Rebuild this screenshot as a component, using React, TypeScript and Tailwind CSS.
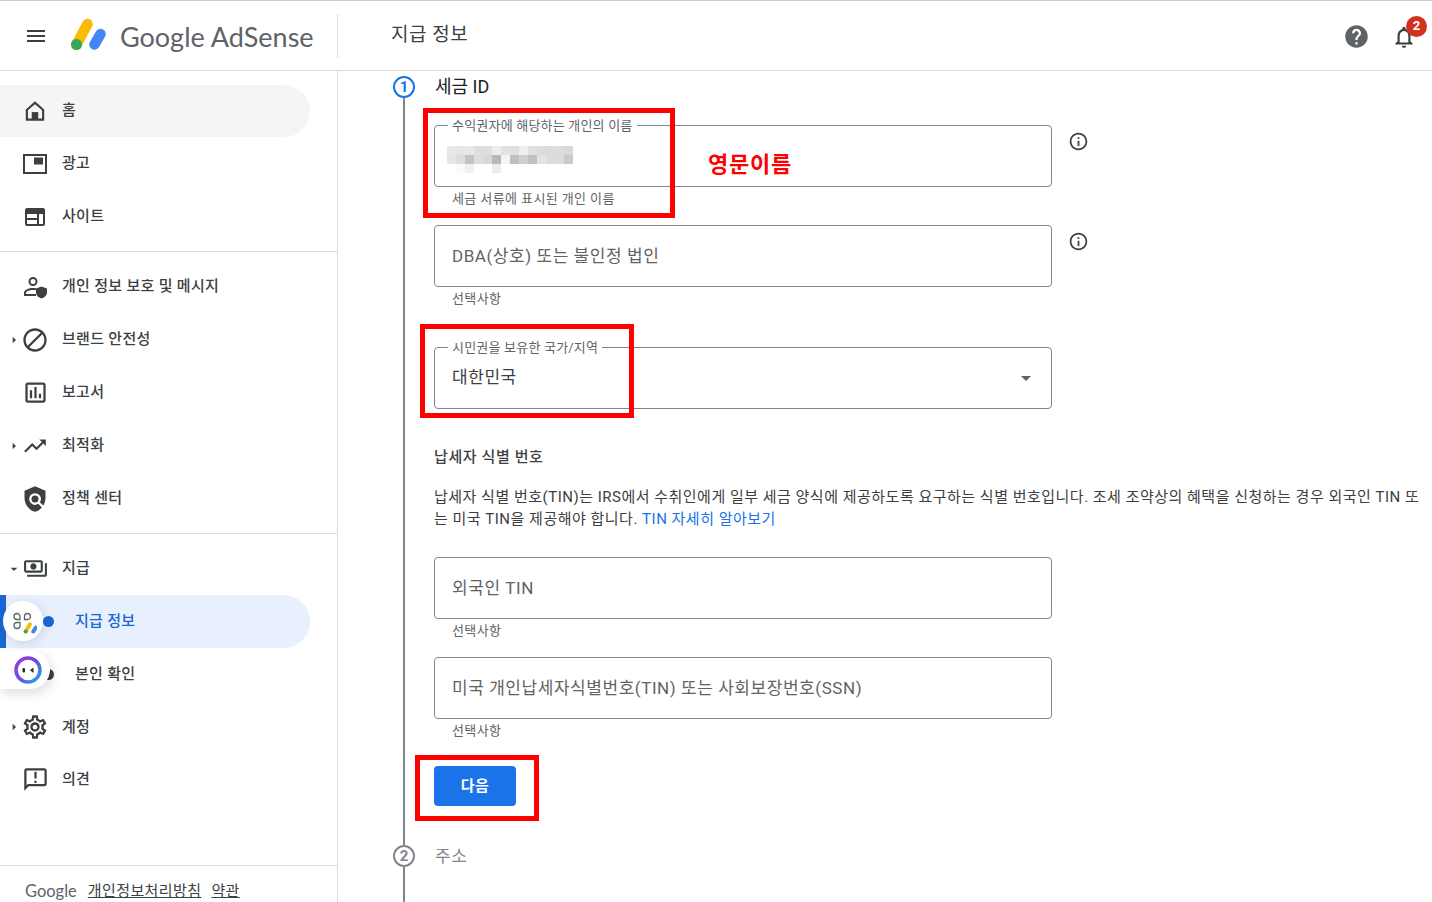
import {
  MdArrowDropDown,
  MdArrowRight,
  MdBlock,
  MdHelp,
  MdInfoOutline,
  MdMenu,
  MdOutlineAnnouncement,
  MdOutlineAssessment,
  MdOutlineNotifications,
  MdOutlinePayments,
  MdOutlineSettings,
  MdPolicy,
  MdTrendingUp,
} from "react-icons/md";
import type { ReactNode } from "react";

const font = "font-['Roboto','Noto_Sans_CJK_KR',sans-serif]";

function Logo() {
  return (
    <svg viewBox="0 0 40 40" className="size-10 shrink-0" aria-hidden="true">
      <line x1="8.5" y1="30.5" x2="19.5" y2="10" stroke="#fbbc04" strokeWidth="10.500" strokeLinecap="round" />
      <line x1="26.5" y1="30.5" x2="32.5" y2="20" stroke="#4285f4" strokeWidth="10.500" strokeLinecap="round" />
      <circle cx="8.5" cy="30.5" r="5.6" fill="#34a853" />
    </svg>
  );
}

function HomeIcon() {
  return (
    <svg viewBox="0 0 24 24" className="size-[26px] shrink-0" fill="#3c4043" aria-hidden="true">
      <path d="M12 3 3.500 10.500V21h17V10.500L12 3Zm6.500 16h-13v-7.600L12 5.700l6.500 5.700V19Z" />
      <rect x="9" y="13" width="6" height="7" />
    </svg>
  );
}

function AdIcon() {
  return (
    <svg viewBox="0 0 24 20" className="h-[20px] w-[24px] shrink-0" fill="#3c4043" aria-hidden="true">
      <path d="M0 0h24v20H0V0Zm2 2v16h20V2H2Z" />
      <rect x="11" y="3.500" width="9" height="7" />
    </svg>
  );
}

function SiteIcon() {
  return (
    <svg viewBox="0 0 24 24" className="size-6 shrink-0" fill="#3c4043" aria-hidden="true">
      <path d="M4 3h16a2 2 0 0 1 2 2v14a2 2 0 0 1-2 2H4a2 2 0 0 1-2-2V5a2 2 0 0 1 2-2Zm0 6v4h10V9H4Zm12 0v10h4V9h-4ZM4 15v4h10v-4H4Z" />
    </svg>
  );
}

function PrivacyIcon() {
  return (
    <svg viewBox="0 0 24 24" className="size-6 shrink-0" fill="#3c4043" aria-hidden="true">
      <path d="M10 2a4.500 4.500 0 1 1 0 9 4.500 4.500 0 0 1 0-9Zm0 2a2.500 2.500 0 1 0 0 5 2.500 2.500 0 0 0 0-5ZM1 21v-3c0-3.200 5-5 9-5 1 0 2 .1 3 .3v2C12 15.100 11 15 10 15c-3.500 0-7 1.300-7 3v1h10v2H1Z" />
      <path d="M18.500 11.500 24 13.500v4c0 2.800-2.300 5-5.500 6-3.200-1-5.500-3.200-5.500-6v-4l5.500-2Z" />
    </svg>
  );
}

function NavItem({
  icon,
  label,
  arrow,
  active,
  tall,
}: {
  icon: ReactNode;
  label: string;
  arrow?: "right" | "down";
  active?: boolean;
  tall?: boolean;
}) {
  return (
    <a
      href="#"
      className={`relative flex items-center w-[310px] rounded-r-full text-[15px] tracking-[0.3px] font-medium text-[#3c4043] ${
        tall ? "h-[52px]" : "h-[53px]"
      } ${active ? "bg-[#f5f5f5]" : ""}`}
    >
      <span className="flex w-[12px] ml-[8px] justify-center">
        {arrow === "right" && <MdArrowRight className="size-4 shrink-0 text-[#3c4043]" />}
        {arrow === "down" && <MdArrowDropDown className="size-4 shrink-0 text-[#3c4043]" />}
      </span>
      <span className="flex w-[24px] ml-[3px] justify-center">{icon}</span>
      <span className={`ml-[15px] ${active ? "pb-[2px]" : ""}`}>{label}</span>
    </a>
  );
}

function SubItem({ label, active }: { label: string; active?: boolean }) {
  return (
    <a
      href="#"
      className={`flex items-center w-[310px] rounded-r-full text-[15px] tracking-[0.3px] font-medium ${
        active ? "h-[53px] bg-[#e8f0fe] text-[#1967d2] border-l-[6px] border-[#1967d2]" : "h-[53px] text-[#3c4043] pl-[6px]"
      }`}
    >
      <span className={`ml-[37px] size-[11px] rounded-full ${active ? "bg-[#1967d2]" : "bg-[#3c4043]"}`} />
      <span className="ml-[21px]">{label}</span>
    </a>
  );
}

function Sidebar() {
  return (
    <aside className="relative flex flex-col w-[338px] shrink-0 border-r border-[#dadce0] h-full">
      <nav className="flex flex-col pt-[14px]">
        <NavItem tall active icon={<HomeIcon />} label="홈" />
        <NavItem icon={<AdIcon />} label="광고" />
        <NavItem icon={<SiteIcon />} label="사이트" />
      </nav>
      <div className="mt-[8px] border-t border-[#dadce0]" />
      <nav className="flex flex-col pt-[8px]">
        <NavItem icon={<PrivacyIcon />} label="개인 정보 보호 및 메시지" />
        <NavItem arrow="right" icon={<MdBlock className="size-[28px] shrink-0 text-[#3c4043]" />} label="브랜드 안전성" />
        <NavItem icon={<MdOutlineAssessment className="size-[27px] shrink-0 text-[#3c4043]" />} label="보고서" />
        <NavItem arrow="right" icon={<MdTrendingUp className="size-[26px] shrink-0 text-[#3c4043]" />} label="최적화" />
        <NavItem icon={<MdPolicy className="size-[28px] shrink-0 text-[#3c4043]" />} label="정책 센터" />
      </nav>
      <div className="mt-[8px] border-t border-[#dadce0]" />
      <nav className="flex flex-col pt-[8px]">
        <NavItem arrow="down" icon={<MdOutlinePayments className="size-[25px] shrink-0 text-[#3c4043]" />} label="지급" />
        <SubItem active label="지급 정보" />
        <SubItem label="본인 확인" />
        <NavItem tall arrow="right" icon={<MdOutlineSettings className="size-[28px] shrink-0 text-[#3c4043]" />} label="계정" />
        <NavItem tall icon={<MdOutlineAnnouncement className="size-[27px] shrink-0 text-[#3c4043]" />} label="의견" />
      </nav>
      <footer className="mt-auto flex items-start h-[37px] border-t border-[#dadce0] pl-[25px] pt-[14px] text-[15px] leading-[22px] tracking-[0.4px] text-[#3c4043]">
        <span className="font-['Lato',sans-serif] text-[16.5px] tracking-normal text-[#5f6368]">Google</span>
        <a href="#" className="ml-[11px] underline">개인정보처리방침</a>
        <a href="#" className="ml-[10px] underline">약관</a>
      </footer>

      {/* floating browser extension buttons */}
      <div className="absolute left-[3px] top-[530px] flex size-[40px] items-center justify-center rounded-full bg-white shadow-[2px_2px_10px_rgba(0,0,0,0.12)]">
        <svg viewBox="0 0 28 28" className="size-7" aria-hidden="true">
          <path d="M11 7.500a3 3 0 0 1 3 3v3h-3a3 3 0 0 1 0-6Z" fill="none" stroke="#5f6368" strokeWidth="1.300" transform="translate(-3 -1)" />
          <path d="M18.500 6.500a3 3 0 0 1 0 6h-3v-3a3 3 0 0 1 3-3Z" fill="none" stroke="#5f6368" strokeWidth="1.300" />
          <path d="M11 15.500v3a3 3 0 1 1-3-3h3Z" fill="none" stroke="#5f6368" strokeWidth="1.300" />
          <line x1="16.700" y1="24.500" x2="21" y2="17.300" stroke="#fbbc04" strokeWidth="4" strokeLinecap="round" />
          <line x1="24.300" y1="24.500" x2="26.700" y2="20.700" stroke="#4285f4" strokeWidth="4" strokeLinecap="round" />
          <circle cx="16.700" cy="24.500" r="2" fill="#34a853" />
        </svg>
      </div>
      <div className="absolute left-0 top-[579px] flex h-[39px] w-[50px] items-center justify-end rounded-r-full bg-white pr-[8px] shadow-[2px_4px_12px_rgba(0,0,0,0.14)]">
        <svg viewBox="0 0 28 28" className="size-7" aria-hidden="true">
          <defs>
            <linearGradient id="ring" x1="0" y1="0" x2="1" y2="1">
              <stop offset="0" stopColor="#a436d8" />
              <stop offset="0.500" stopColor="#6a4de0" />
              <stop offset="1" stopColor="#1fa8f0" />
            </linearGradient>
          </defs>
          <circle cx="14" cy="14" r="12" fill="#fff" stroke="url(#ring)" strokeWidth="3.500" />
          <rect x="8.500" y="12" width="2.500" height="4.500" rx="1" fill="#27272a" />
          <path d="M19.500 11.500 16 14.200l3.500 2.800v-5.500Z" fill="#27272a" />
        </svg>
      </div>
    </aside>
  );
}

function Field({
  label,
  placeholder,
  helper,
  info,
  value,
  children,
  className,
}: {
  label?: string;
  placeholder?: string;
  helper?: string;
  info?: boolean;
  value?: string;
  children?: ReactNode;
  className?: string;
}) {
  return (
    <div className={`relative w-[618px] ${className ?? ""}`}>
      <div className="relative flex h-[62px] items-center rounded-[4px] border border-[#80868b] px-[17px] text-[17px] tracking-[0.55px] text-[#5f6368]">
        {label && (
          <span className="absolute -top-[8px] left-[13px] bg-white px-[4px] text-[13px] leading-[16px] tracking-[0.2px] text-[#5f6368]">
            {label}
          </span>
        )}
        {placeholder && <span className="pt-px">{placeholder}</span>}
        {value && <span className="text-[#3c4043]">{value}</span>}
        {children}
      </div>
      {helper && <p className="h-[24px] pl-[18px] text-[13px] leading-[24px] tracking-[0.4px] text-[#5f6368]">{helper}</p>}
      {info && <MdInfoOutline className="absolute left-[634px] top-[6px] size-[21px] text-[#3c4043]" />}
    </div>
  );
}

const blurCells = [
  "bg-[#e8e8e8]", "bg-[#e5e5e5]", "bg-[#e8e8e8]", "bg-[#dedede]", "bg-[#dedede]", "bg-[#ececec]", "bg-[#e2e2e2]", "bg-[#e0e0e0]", "bg-[#eeeeee]", "bg-[#e0e0e0]", "bg-[#dcdcdc]", "bg-[#dcdcdc]", "bg-[#dddddd]", "bg-[#d8d8d8]",
  "bg-[#e6e6e6]", "bg-[#dddddd]", "bg-[#c4c4c4]", "bg-[#dddddd]", "bg-[#d8d8d8]", "bg-[#b8b8b8]", "bg-[#f4f4f4]", "bg-[#c0c0c0]", "bg-[#cfcfcf]", "bg-[#c2c2c2]", "bg-[#e4e4e4]", "bg-[#dcdcdc]", "bg-[#dcdcdc]", "bg-[#cacaca]",
  "bg-white", "bg-[#fafafa]", "bg-[#f0f0f0]", "bg-white", "bg-white", "bg-[#ececec]", "bg-white", "bg-white", "bg-white", "bg-white", "bg-white", "bg-white", "bg-white", "bg-white",
];

function PayoutForm() {
  return (
    <main className={`relative flex-1 h-full pl-[55px] overflow-hidden ${font}`}>
      <div className="flex h-[769px]">
        <div className="flex flex-col items-center w-[22px] pt-[5px]">
          <span className="flex size-[22px] shrink-0 items-center justify-center rounded-full border-2 border-[#1a73e8] text-[15px] font-bold text-[#1a73e8]">
            1
          </span>
          <span className="w-[2px] flex-1 bg-[#80868b]" />
        </div>
        <div className="ml-[19px] pt-[5px]">
          <h2 className="h-[22px] pl-px text-[18px] leading-[22px] text-[#202124]">세금 ID</h2>
          <Field
            className="mt-[27px]"
            label="수익권자에 해당하는 개인의 이름"
            helper="세금 서류에 표시된 개인 이름"
            info
          >
            <div className="mt-[7px] ml-[-5px] grid w-[126px] grid-cols-[repeat(14,9px)]">
              {blurCells.map((c, i) => (
                <span key={i} className={`h-[9px] ${c}`} />
              ))}
            </div>
          </Field>
          <Field className="mt-[14px]" placeholder="DBA(상호) 또는 불인정 법인" helper="선택사항" info />
          <Field className="mt-[36px]" label="시민권을 보유한 국가/지역" value="대한민국">
            <MdArrowDropDown className="ml-auto -mr-[4px] size-6 text-[#5f6368]" />
          </Field>
          <h3 className="mt-[37px] text-[15px] tracking-[0.6px] font-medium leading-[22px] text-[#3c4043]">납세자 식별 번호</h3>
          <p className="mt-[18px] w-[990px] text-[15px] tracking-[0.5px] leading-[22px] text-[#3c4043]">
            납세자 식별 번호(TIN)는 IRS에서 수취인에게 일부 세금 양식에 제공하도록 요구하는 식별 번호입니다. 조세 조약상의 혜택을 신청하는 경우 외국인 TIN 또는 미국 TIN을 제공해야 합니다.{" "}
            <a href="#" className="text-[#1a73e8]">TIN 자세히 알아보기</a>
          </p>
          <Field className="mt-[27px]" placeholder="외국인 TIN" helper="선택사항" />
          <Field className="mt-[14px]" placeholder="미국 개인납세자식별번호(TIN) 또는 사회보장번호(SSN)" helper="선택사항" />
          <button
            type="button"
            className="mt-[23px] block h-[40px] w-[82px] rounded-[4px] bg-[#1a73e8] text-[15px] tracking-[0.5px] font-bold text-white"
          >
            다음
          </button>
        </div>
      </div>
      <div className="flex h-[62px]">
        <div className="flex flex-col items-center w-[22px]">
          <span className="w-[2px] h-[5px] bg-[#80868b]" />
          <span className="flex size-[22px] shrink-0 items-center justify-center rounded-full border-2 border-[#80868b] text-[15px] font-bold text-[#80868b]">
            2
          </span>
          <span className="w-[2px] flex-1 bg-[#80868b]" />
        </div>
        <h2 className="ml-[20px] mt-[5px] text-[17px] tracking-[0.6px] leading-[22px] text-[#80868b]">주소</h2>
      </div>

      {/* red annotations drawn on top of the capture */}
      <div className="absolute left-[85px] top-[37px] h-[110px] w-[252px] border-[5px] border-[#ff0000]" />
      <div className="absolute left-[82px] top-[253px] h-[94px] w-[214px] border-[5px] border-[#ff0000]" />
      <div className="absolute left-[77px] top-[684px] h-[66px] w-[124px] border-[5px] border-[#ff0000]" />
      <span className="absolute left-[370px] top-[79px] text-[22px] tracking-[0.8px] leading-[30px] font-bold text-[#ff0000]">영문이름</span>
    </main>
  );
}

export default function App() {
  return (
    <div className={`flex h-[902px] w-[1432px] flex-col overflow-hidden bg-white ${font}`}>
      <header className="flex h-[71px] shrink-0 items-center border-t border-b border-t-[#cccccc] border-b-[#dadce0]">
        <div className="flex w-[338px] items-center">
          <MdMenu className="ml-[24px] size-6 shrink-0 text-[#3c4043]" />
          <span className="ml-[20px] -mt-[4px]"><Logo /></span>
          <span className="ml-[12px] pt-[4px] font-['Lato',sans-serif] text-[27px] text-[#5f6368]">Google AdSense</span>
        </div>
        <span className="h-[44px] border-l border-[#dadce0] -ml-px" />
        <h1 className="ml-[53px] text-[19px] tracking-[0.5px] text-[#3c4043]">지급 정보</h1>
        <MdHelp className="ml-auto mt-[2px] size-[27px] text-[#5f6368]" />
        <div className="relative ml-[21px] mr-[15px] mt-[2px] size-[26px]">
          <MdOutlineNotifications className="size-[26px] text-[#3c4043]" />
          <span className="absolute -right-[10px] -top-[8px] flex size-[21px] items-center justify-center rounded-full bg-[#d0321f] text-[13px] font-bold text-white">
            2
          </span>
        </div>
      </header>
      <div className="flex h-[831px]">
        <Sidebar />
        <PayoutForm />
      </div>
    </div>
  );
}
